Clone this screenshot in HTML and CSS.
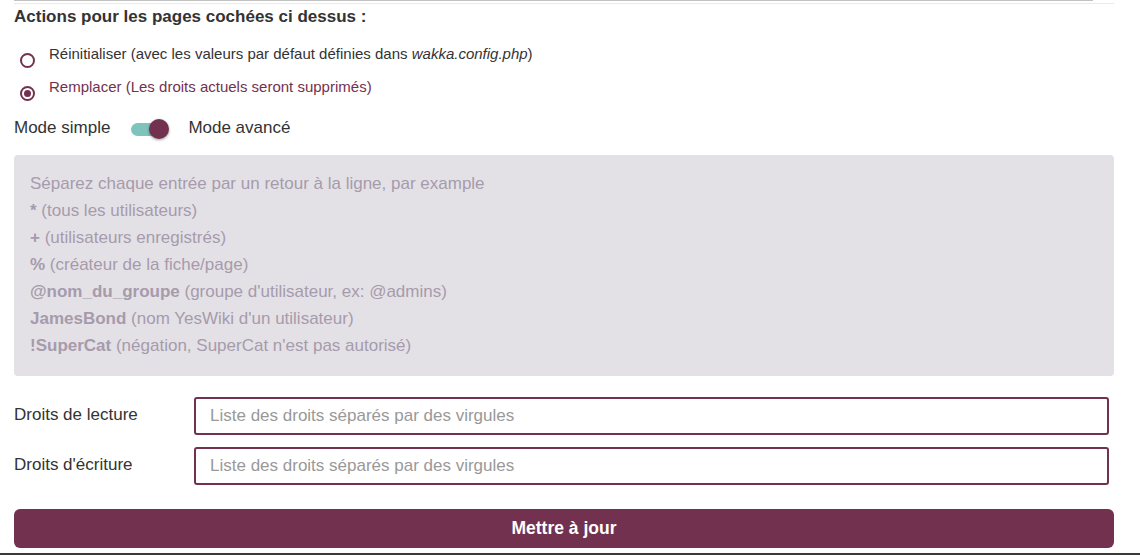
FILE: index.html
```html
<!DOCTYPE html>
<html lang="fr">
<head>
<meta charset="utf-8">
<title>Droits</title>
<link rel="stylesheet" href="styles.css">
</head>
<body>
<div class="page">
  <div class="rule-top"></div>
  <div class="rule-light"></div>
  <h3 class="title">Actions pour les pages cochées ci dessus :</h3>

  <div class="radios">
    <label class="radio-row">
      <span class="radio"></span>
      <span class="radio-label">Réinitialiser (avec les valeurs par défaut définies dans <em>wakka.config.php</em>)</span>
    </label>
    <label class="radio-row">
      <span class="radio is-checked"></span>
      <span class="radio-label checked">Remplacer (Les droits actuels seront supprimés)</span>
    </label>
  </div>

  <div class="mode-row">
    <span class="mode-text">Mode simple</span>
    <span class="toggle"><span class="toggle-track"></span><span class="toggle-knob"></span></span>
    <span class="mode-text">Mode avancé</span>
  </div>

  <div class="help-box">
    <div class="help-line">Séparez chaque entrée par un retour à la ligne, par example</div>
    <div class="help-line"><b>*</b> (tous les utilisateurs)</div>
    <div class="help-line"><b>+</b> (utilisateurs enregistrés)</div>
    <div class="help-line"><b>%</b> (créateur de la fiche/page)</div>
    <div class="help-line"><b>@nom_du_groupe</b> (groupe d'utilisateur, ex: @admins)</div>
    <div class="help-line"><b>JamesBond</b> (nom YesWiki d'un utilisateur)</div>
    <div class="help-line"><b>!SuperCat</b> (négation, SuperCat n'est pas autorisé)</div>
  </div>

  <div class="form-rows">
    <div class="form-row">
      <label class="form-label">Droits de lecture</label>
      <input class="form-input" type="text" placeholder="Liste des droits séparés par des virgules">
    </div>
    <div class="form-row">
      <label class="form-label">Droits d'écriture</label>
      <input class="form-input" type="text" placeholder="Liste des droits séparés par des virgules">
    </div>
  </div>

  <button class="submit" type="button">Mettre à jour</button>
</div>
<div class="rule-bottom"></div>
</body>
</html>
```

FILE: styles.css
```css
html, body {
  margin: 0;
  padding: 0;
  background: #fff;
}

body {
  font-family: "Liberation Sans", Arial, sans-serif;
  color: #333;
  width: 1140px;
  height: 555px;
  overflow: hidden;
}

.page {
  padding: 0 26px 0 14px;
}

.rule-top {
  width: 1079px;
  height: 1px;
  background: #c2c2c2;
}

.rule-light {
  margin-top: 2px;
  width: 1100px;
  height: 1px;
  background: #ebebeb;
}

.title {
  margin: 3px 0 0;
  font-size: 17px;
  line-height: 20px;
  font-weight: bold;
  color: #333;
}

.radios {
  margin-top: 17px;
  display: flex;
  flex-direction: column;
  gap: 13px;
}

.radio-row {
  display: flex;
  align-items: flex-start;
  height: 20px;
}

.radio {
  display: flex;
  align-items: center;
  justify-content: center;
  margin: 9px 14px 0 6px;
  width: 15px;
  height: 15px;
  border: 2px solid #72324f;
  border-radius: 50%;
  box-sizing: border-box;
  background: #fff;
  flex: none;
}

.radio.is-checked::after {
  content: "";
  width: 7px;
  height: 7px;
  border-radius: 50%;
  background: #72324f;
}

.radio-label {
  font-size: 15px;
  line-height: 20px;
  color: #333;
}

.radio-label.checked {
  color: #72324f;
}

.radio-label em {
  font-style: italic;
}

.mode-row {
  margin-top: 21px;
  display: flex;
  align-items: center;
  height: 20px;
}

.mode-text {
  font-size: 17px;
  line-height: 20px;
}

.toggle {
  position: relative;
  width: 38px;
  height: 20px;
  margin: 2px 19px 0 21px;
  display: flex;
  align-items: center;
}

.toggle-track {
  width: 35px;
  height: 13px;
  border-radius: 7px;
  background: #7fc4bc;
}

.toggle-knob {
  position: absolute;
  right: 0;
  top: 0;
  width: 20px;
  height: 20px;
  border-radius: 50%;
  background: #72324f;
  box-shadow: 0 1px 3px rgba(0, 0, 0, 0.4);
}

.help-box {
  margin-top: 17px;
  width: 1100px;
  box-sizing: border-box;
  padding: 15px 16px 17px;
  background: #e4e1e6;
  border-radius: 4px;
  color: #a69bac;
  font-size: 17px;
  line-height: 27px;
}

.help-line b {
  font-weight: bold;
}

.form-rows {
  margin-top: 21px;
  display: flex;
  flex-direction: column;
  gap: 12px;
  width: 1100px;
}

.form-row {
  display: flex;
  align-items: center;
}

.form-label {
  width: 180px;
  flex: none;
  font-size: 17px;
  line-height: 20px;
  color: #333;
  margin-top: -2px;
}

.form-input {
  width: 915px;
  height: 38px;
  box-sizing: border-box;
  border: 2px solid #72324f;
  border-radius: 3px;
  padding: 0 14px;
  font-family: "Liberation Sans", Arial, sans-serif;
  font-size: 17px;
  color: #555;
  background: #fff;
  outline: none;
}

.form-input::placeholder {
  color: #999;
}

.submit {
  display: block;
  margin-top: 24px;
  width: 1100px;
  height: 39px;
  border: none;
  border-radius: 6px;
  background: #72324f;
  color: #fff;
  font-family: "Liberation Sans", Arial, sans-serif;
  font-size: 17.5px;
  font-weight: bold;
}

.rule-bottom {
  margin-top: 5px;
  height: 2px;
  background: #3a3a3a;
}
```
